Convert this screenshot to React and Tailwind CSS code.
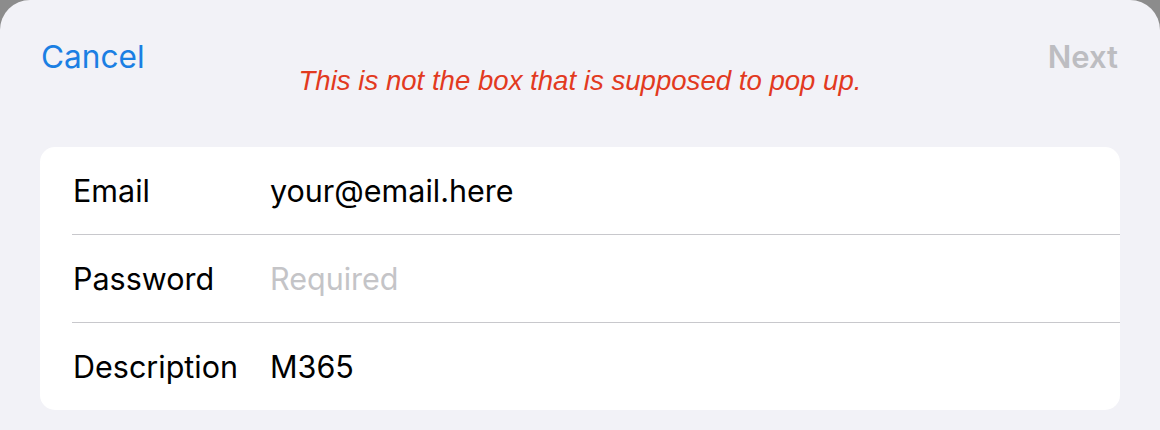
export default function App() {
  const rows = [
    { label: "Email", value: "your@email.here", placeholder: false },
    { label: "Password", value: "Required", placeholder: true },
    { label: "Description", value: "M365", placeholder: false },
  ];
  return (
    <div className="w-[1160px] h-[430px] bg-[#8c8c8c] overflow-hidden" style={{ fontFamily: "Inter, 'Noto Sans', sans-serif" }}>
      <div className="h-full bg-[#f2f2f7] rounded-t-[30px] pt-[38px]">
        <div className="grid grid-cols-[1fr_auto_1fr] px-[41px] h-[109px]">
          <div className="text-[31.6px] leading-[38px] text-[#1b7fe3]">Cancel</div>
          <div
            className="mt-[25px] text-[27.6px] leading-[36px] italic text-[#e23a1f]"
            style={{ fontFamily: "'Liberation Sans', Arial, sans-serif" }}
          >
            This is not the box that is supposed to pop up.
          </div>
          <div className="text-right pr-[1px] text-[31px] leading-[38px] font-semibold text-[#bdbdc1]">Next</div>
        </div>
        <div className="mx-[40px] bg-white rounded-[15px] overflow-hidden">
          {rows.map((r, i) => (
            <div key={r.label} className="pl-[32px]">
              <div className={`flex items-center ${i > 0 ? "h-[88px] border-t border-[#c8c8cc]" : "h-[87px]"}`}>
                <div className="w-[198px] pl-[1px] text-[30.5px] text-black">{r.label}</div>
                <div className={`text-[30.5px] ${r.placeholder ? "text-[#c4c4c7]" : "text-black"}`}>{r.value}</div>
              </div>
            </div>
          ))}
        </div>
      </div>
    </div>
  );
}
